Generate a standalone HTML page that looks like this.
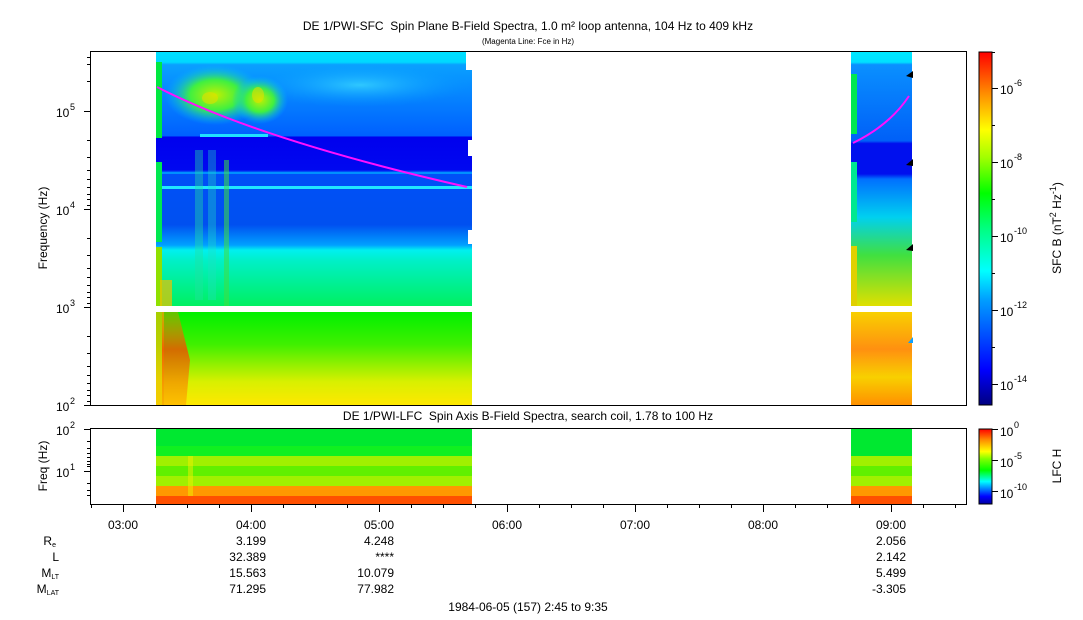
<!DOCTYPE html>
<html><head><meta charset="utf-8"><style>
html,body{margin:0;padding:0;background:#fff;}
svg{display:block;font-family:"Liberation Sans",Arial,sans-serif;}
</style></head><body>
<svg width="1083" height="620" viewBox="0 0 1083 620" xmlns="http://www.w3.org/2000/svg">
<defs>
<linearGradient id="gA" x1="0" y1="0" x2="0" y2="1">
<stop offset="0" stop-color="#00e0ff"/><stop offset="0.04" stop-color="#00d8ff"/>
<stop offset="0.05" stop-color="#0aa0ff"/><stop offset="0.33" stop-color="#0060ff"/>
<stop offset="0.335" stop-color="#0000ee"/><stop offset="0.465" stop-color="#0008f0"/>
<stop offset="0.47" stop-color="#0050f8"/><stop offset="0.68" stop-color="#0050f0"/>
<stop offset="0.76" stop-color="#00a0ff"/><stop offset="0.78" stop-color="#00f0f0"/>
<stop offset="0.82" stop-color="#00f0c8"/><stop offset="1" stop-color="#00f060"/>
</linearGradient>
<linearGradient id="gB" x1="0" y1="0" x2="0" y2="1">
<stop offset="0" stop-color="#00f000"/><stop offset="0.35" stop-color="#40f000"/>
<stop offset="0.75" stop-color="#d8f000"/><stop offset="1" stop-color="#ffe800"/>
</linearGradient>
<linearGradient id="gC" x1="0" y1="0" x2="0" y2="1">
<stop offset="0" stop-color="#00e8ff"/><stop offset="0.04" stop-color="#00e0ff"/><stop offset="0.05" stop-color="#0a90ff"/>
<stop offset="0.35" stop-color="#0060f8"/><stop offset="0.36" stop-color="#0010ee"/>
<stop offset="0.48" stop-color="#0010ee"/><stop offset="0.5" stop-color="#0070ff"/>
<stop offset="0.65" stop-color="#00d0f0"/><stop offset="0.8" stop-color="#40e040"/>
<stop offset="1" stop-color="#e0e000"/>
</linearGradient>
<linearGradient id="gD" x1="0" y1="0" x2="0" y2="1">
<stop offset="0" stop-color="#f8d000"/><stop offset="0.4" stop-color="#ff9010"/>
<stop offset="0.7" stop-color="#f8d000"/><stop offset="1" stop-color="#ff9000"/>
</linearGradient>
<linearGradient id="cb" x1="0" y1="1" x2="0" y2="0">
<stop offset="0" stop-color="#000080"/><stop offset="0.1" stop-color="#0000ff"/>
<stop offset="0.3" stop-color="#00a0ff"/><stop offset="0.38" stop-color="#00ffff"/>
<stop offset="0.5" stop-color="#00ff80"/><stop offset="0.6" stop-color="#00ff00"/>
<stop offset="0.7" stop-color="#a0ff00"/><stop offset="0.78" stop-color="#ffff00"/>
<stop offset="0.88" stop-color="#ff9000"/><stop offset="1" stop-color="#ff0000"/>
</linearGradient>
<linearGradient id="cb2" x1="0" y1="1" x2="0" y2="0">
<stop offset="0" stop-color="#0000a0"/><stop offset="0.1" stop-color="#0000ff"/>
<stop offset="0.3" stop-color="#00ffff"/><stop offset="0.45" stop-color="#00ff00"/>
<stop offset="0.6" stop-color="#80ff00"/><stop offset="0.7" stop-color="#ffff00"/>
<stop offset="0.85" stop-color="#ff9000"/><stop offset="1" stop-color="#ff0000"/>
</linearGradient>
<radialGradient id="blob" cx="0.5" cy="0.5" r="0.5">
<stop offset="0" stop-color="#c0f000"/><stop offset="0.5" stop-color="#40f040"/><stop offset="1" stop-color="#00c0ff" stop-opacity="0"/>
</radialGradient>
<radialGradient id="blob2" cx="0.5" cy="0.5" r="0.5">
<stop offset="0" stop-color="#40e0ff"/><stop offset="1" stop-color="#00a0ff" stop-opacity="0"/>
</radialGradient>
<linearGradient id="red" x1="0" y1="0" x2="0" y2="1">
<stop offset="0" stop-color="#ff8000" stop-opacity="0.5"/><stop offset="0.4" stop-color="#ff4000"/><stop offset="1" stop-color="#ff9000" stop-opacity="0.6"/>
</linearGradient>
</defs>

<text x="528" y="30" font-size="12" text-anchor="middle" xml:space="preserve">DE 1/PWI-SFC  Spin Plane B-Field Spectra, 1.0 m² loop antenna, 104 Hz to 409 kHz</text>
<text x="528" y="44" font-size="8" text-anchor="middle">(Magenta Line: Fce in Hz)</text>

<rect x="156" y="52" width="316" height="254" fill="url(#gA)"/>
<rect x="156" y="62" width="6" height="76" fill="#00e840"/>
<rect x="156" y="162" width="6" height="80" fill="#00e850"/>
<rect x="156" y="247" width="6" height="59" fill="#90e000"/>
<ellipse cx="215" cy="95" rx="50" ry="30" fill="url(#blob)"/>
<ellipse cx="260" cy="100" rx="28" ry="24" fill="url(#blob)"/>
<ellipse cx="210" cy="98" rx="8" ry="6" fill="#e0e000" opacity="0.6"/>
<ellipse cx="258" cy="95" rx="6" ry="8" fill="#e0e000" opacity="0.6"/>
<ellipse cx="360" cy="85" rx="110" ry="22" fill="url(#blob2)" opacity="0.7"/>
<rect x="200" y="134" width="68" height="3" fill="#20e0ff"/>
<rect x="162" y="172" width="310" height="2" fill="#0090ff"/>
<rect x="162" y="186" width="310" height="3" fill="#20e8ff"/>
<rect x="195" y="150" width="8" height="150" fill="#20e0a0" opacity="0.4"/>
<rect x="208" y="150" width="8" height="150" fill="#20e0c0" opacity="0.35"/>
<rect x="224" y="160" width="5" height="146" fill="#40e040" opacity="0.55"/>
<rect x="160" y="280" width="12" height="26" fill="#f0c000" opacity="0.7"/>
<rect x="466" y="52" width="6" height="18" fill="#fff"/>
<rect x="468" y="140" width="4" height="16" fill="#fff"/>
<rect x="468" y="230" width="4" height="14" fill="#fff"/>
<path d="M157 87 Q 260 140 467 187" stroke="#ff10ff" stroke-width="2" fill="none"/>

<rect x="156" y="312" width="316" height="93" fill="url(#gB)"/>
<rect x="156" y="312" width="8" height="93" fill="#f0c000" opacity="0.7"/>
<path d="M162 312 L178 312 L190 360 L186 405 L162 405 Z" fill="url(#red)" opacity="0.75"/>

<rect x="851" y="52" width="61" height="254" fill="url(#gC)"/>
<rect x="851" y="74" width="6" height="60" fill="#00e850"/>
<rect x="851" y="162" width="6" height="60" fill="#00e890"/>
<rect x="851" y="246" width="6" height="60" fill="#e0d000"/>
<path d="M853 143 Q 890 125 909 96" stroke="#ff10ff" stroke-width="2" fill="none"/>
<path d="M906 76 L913 71 L913 78 Z M906 165 L913 159 L913 166 Z M906 250 L913 244 L913 251 Z" fill="#000"/>
<rect x="851" y="312" width="61" height="93" fill="url(#gD)"/>
<path d="M908 343 L913 337 L913 343 Z" fill="#10a0ff"/>

<rect x="90.5" y="51.5" width="876" height="354" fill="none" stroke="#000" stroke-width="1"/>
<g stroke="#000" stroke-width="1">
<path d="M84 111.5H90M84 209.5H90M84 307.5H90M84 405.5H90"/>
<path d="M87 81.5H90M87 64.5H90M87 57.5H90M87 140.5H90M87 157.5H90M87 170.5H90M87 179.5H90M87 187.5H90M87 194.5H90M87 199.5H90M87 205.5H90M87 238.5H90M87 255.5H90M87 268.5H90M87 277.5H90M87 285.5H90M87 292.5H90M87 297.5H90M87 303.5H90M87 336.5H90M87 353.5H90M87 366.5H90M87 375.5H90M87 383.5H90M87 390.5H90M87 395.5H90M87 401.5H90"/>
</g>
<g font-size="12">
<text x="56" y="117">10</text><text x="70" y="110" font-size="9">5</text>
<text x="56" y="215">10</text><text x="70" y="208" font-size="9">4</text>
<text x="56" y="313">10</text><text x="70" y="306" font-size="9">3</text>
<text x="56" y="411">10</text><text x="70" y="404" font-size="9">2</text>
</g>
<text transform="translate(47,228) rotate(-90)" font-size="12" text-anchor="middle">Frequency (Hz)</text>

<rect x="979" y="52" width="13" height="353" fill="url(#cb)" stroke="#000" stroke-width="1"/>
<g stroke="#000"><path d="M992 88.5H998M992 162.5H998M992 236.5H998M992 310.5H998M992 384.5H998"/>
<path d="M992 52.5H995M992 125.5H995M992 199.5H995M992 273.5H995M992 347.5H995"/></g>
<g font-size="12">
<text x="1000" y="94">10</text><text x="1014" y="86" font-size="9">-6</text>
<text x="1000" y="168">10</text><text x="1014" y="160" font-size="9">-8</text>
<text x="1000" y="242">10</text><text x="1014" y="234" font-size="9">-10</text>
<text x="1000" y="316">10</text><text x="1014" y="308" font-size="9">-12</text>
<text x="1000" y="390">10</text><text x="1014" y="382" font-size="9">-14</text>
</g>
<text transform="translate(1061,228) rotate(-90)" font-size="12" text-anchor="middle">SFC B (nT<tspan font-size="9" dy="-5">2</tspan><tspan dy="5"> Hz</tspan><tspan font-size="9" dy="-5">-1</tspan><tspan dy="5">)</tspan></text>

<text x="528" y="420" font-size="12" text-anchor="middle" xml:space="preserve">DE 1/PWI-LFC  Spin Axis B-Field Spectra, search coil, 1.78 to 100 Hz</text>

<g>
<rect x="156" y="429" width="316" height="27" fill="#00e830"/>
<rect x="156" y="446" width="316" height="10" fill="#10f020"/>
<rect x="156" y="456" width="316" height="10" fill="#a0f000"/>
<rect x="156" y="466" width="316" height="10" fill="#60f000"/>
<rect x="156" y="476" width="316" height="10" fill="#a0f000"/>
<rect x="156" y="486" width="316" height="10" fill="#ff9800"/>
<rect x="156" y="496" width="316" height="8" fill="#ff5000"/>
<rect x="188" y="456" width="5" height="40" fill="#f0f000" opacity="0.5"/>
<rect x="851" y="429" width="61" height="27" fill="#00e830"/>
<rect x="851" y="456" width="61" height="10" fill="#a0f000"/>
<rect x="851" y="466" width="61" height="10" fill="#60f000"/>
<rect x="851" y="476" width="61" height="10" fill="#a0f000"/>
<rect x="851" y="486" width="61" height="10" fill="#ff9800"/>
<rect x="851" y="496" width="61" height="8" fill="#ff5000"/>
</g>
<rect x="90.5" y="428.5" width="876" height="76" fill="none" stroke="#000"/>
<g stroke="#000"><path d="M84 429.5H90M84 471.5H90"/>
<path d="M87 441.5H90M87 448.5H90M87 453.5H90M87 457.5H90M87 461.5H90M87 464.5H90M87 466.5H90M87 483.5H90M87 490.5H90M87 495.5H90"/></g>
<g font-size="12">
<text x="56" y="435">10</text><text x="70" y="428" font-size="9">2</text>
<text x="56" y="477">10</text><text x="70" y="470" font-size="9">1</text>
</g>
<text transform="translate(47,466) rotate(-90)" font-size="12" text-anchor="middle">Freq (Hz)</text>

<rect x="979" y="429" width="13" height="75" fill="url(#cb2)" stroke="#000"/>
<g stroke="#000"><path d="M992 429.5H998M992 460.5H998M992 491.5H998"/></g>
<g font-size="12">
<text x="1000" y="436">10</text><text x="1014" y="428" font-size="9">0</text>
<text x="1000" y="467">10</text><text x="1014" y="459" font-size="9">-5</text>
<text x="1000" y="498">10</text><text x="1014" y="490" font-size="9">-10</text>
</g>
<text transform="translate(1061,466) rotate(-90)" font-size="12" text-anchor="middle">LFC H</text>

<g stroke="#000">
<path d="M123.5 504V512M251.5 504V512M379.5 504V512M507.5 504V512M635.5 504V512M763.5 504V512M891.5 504V512"/>
<path d="M91.5 504V508M155.5 504V508M187.5 504V508M219.5 504V508M283.5 504V508M315.5 504V508M347.5 504V508M411.5 504V508M443.5 504V508M475.5 504V508M539.5 504V508M571.5 504V508M603.5 504V508M667.5 504V508M699.5 504V508M731.5 504V508M795.5 504V508M827.5 504V508M859.5 504V508M923.5 504V508M955.5 504V508"/>
</g>
<g font-size="12" text-anchor="middle">
<text x="123" y="529">03:00</text><text x="251" y="529">04:00</text><text x="379" y="529">05:00</text>
<text x="507" y="529">06:00</text><text x="635" y="529">07:00</text><text x="763" y="529">08:00</text><text x="891" y="529">09:00</text>
</g>
<g font-size="12" text-anchor="end">
<text x="266" y="545">3.199</text><text x="394" y="545">4.248</text><text x="906" y="545">2.056</text>
<text x="266" y="561">32.389</text><text x="394" y="561">****</text><text x="906" y="561">2.142</text>
<text x="266" y="577">15.563</text><text x="394" y="577">10.079</text><text x="906" y="577">5.499</text>
<text x="266" y="593">71.295</text><text x="394" y="593">77.982</text><text x="906" y="593">-3.305</text>
<text x="56" y="545">R<tspan font-size="7" dy="2">e</tspan></text>
<text x="59" y="561">L</text>
<text x="59" y="577">M<tspan font-size="7" dy="2">LT</tspan></text>
<text x="59" y="593">M<tspan font-size="7" dy="2">LAT</tspan></text>
</g>
<text x="528" y="611" font-size="12" text-anchor="middle">1984-06-05 (157) 2:45 to 9:35</text>
</svg>
</body></html>
